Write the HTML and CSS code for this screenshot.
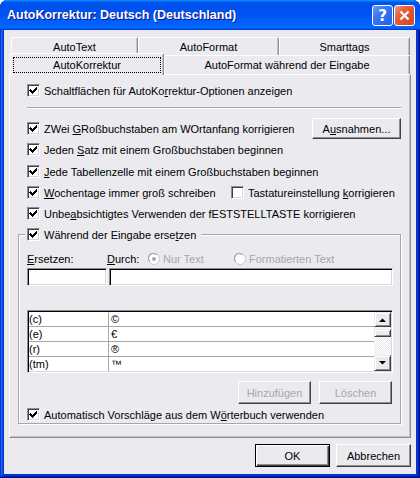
FILE: index.html
```html
<!DOCTYPE html>
<html lang="de">

<head>
  <meta charset="UTF-8">
  <title>AutoKorrektur: Deutsch (Deutschland)</title>
  <link rel="stylesheet" href="styles.css">
</head>

<body>
  <div class="window">
    <div class="titlebar">
      <span class="title">AutoKorrektur: Deutsch (Deutschland)</span>
      <div class="title-buttons">
        <span class="tbtn help">?</span>
        <span class="tbtn close">
          <svg width="11" height="11" viewBox="0 0 11 11"><path d="M1.5 1.5l8 8M9.5 1.5l-8 8" stroke="#fff" stroke-width="2.2"/></svg>
        </span>
      </div>
    </div>

    <div class="client">
      <div class="tab-row back">
        <div class="tab t-autotext">AutoText</div>
        <div class="tab t-autoformat">AutoFormat</div>
        <div class="tab t-smarttags">Smarttags</div>
      </div>
      <div class="tab-row front">
        <div class="tab active"><span class="focus">AutoKorrektur</span></div>
        <div class="tab t-eingabe">AutoFormat während der Eingabe</div>
      </div>

      <div class="panel">
        <div class="row">
          <span class="cb"><svg viewBox="2 2 9 9"><path d="M3 5h1v1h1v1h1v-1h1v-1h1v-1h1v-1h1v3h-1v1h-1v1h-1v1h-1v1h-1v-1h-1v-1h-1v-1h-1z"/></svg></span>
          <span class="lbl">Schaltflächen für AutoKo<u>r</u>rektur-Optionen anzeigen</span>
        </div>

        <div class="sep"></div>

        <div class="row row-btn">
          <span class="cb"><svg viewBox="2 2 9 9"><path d="M3 5h1v1h1v1h1v-1h1v-1h1v-1h1v-1h1v3h-1v1h-1v1h-1v1h-1v1h-1v-1h-1v-1h-1v-1h-1z"/></svg></span>
          <span class="lbl">ZWei <u>G</u>Roßbuchstaben am WOrtanfang korrigieren</span>
          <button class="btn btn-ausnahmen">A<u>u</u>snahmen...</button>
        </div>

        <div class="row r3">
          <span class="cb"><svg viewBox="2 2 9 9"><path d="M3 5h1v1h1v1h1v-1h1v-1h1v-1h1v-1h1v3h-1v1h-1v1h-1v1h-1v1h-1v-1h-1v-1h-1v-1h-1z"/></svg></span>
          <span class="lbl">Jeden <u>S</u>atz mit einem Großbuchstaben beginnen</span>
        </div>

        <div class="row r4">
          <span class="cb"><svg viewBox="2 2 9 9"><path d="M3 5h1v1h1v1h1v-1h1v-1h1v-1h1v-1h1v3h-1v1h-1v1h-1v1h-1v1h-1v-1h-1v-1h-1v-1h-1z"/></svg></span>
          <span class="lbl"><u>J</u>ede Tabellenzelle mit einem Großbuchstaben beginnen</span>
        </div>

        <div class="row r5">
          <div class="half">
            <span class="cb"><svg viewBox="2 2 9 9"><path d="M3 5h1v1h1v1h1v-1h1v-1h1v-1h1v-1h1v3h-1v1h-1v1h-1v1h-1v1h-1v-1h-1v-1h-1v-1h-1z"/></svg></span>
            <span class="lbl"><u>W</u>ochentage immer groß schreiben</span>
          </div>
          <span class="cb"></span>
          <span class="lbl">Tastatureinstellung <u>k</u>orrigieren</span>
        </div>

        <div class="row r6">
          <span class="cb"><svg viewBox="2 2 9 9"><path d="M3 5h1v1h1v1h1v-1h1v-1h1v-1h1v-1h1v3h-1v1h-1v1h-1v1h-1v1h-1v-1h-1v-1h-1v-1h-1z"/></svg></span>
          <span class="lbl">Unbe<u>a</u>bsichtigtes Verwenden der fESTSTELLTASTE korrigieren</span>
        </div>

        <div class="group">
          <div class="legend">
            <span class="cb"><svg viewBox="2 2 9 9"><path d="M3 5h1v1h1v1h1v-1h1v-1h1v-1h1v-1h1v3h-1v1h-1v1h-1v1h-1v1h-1v-1h-1v-1h-1v-1h-1z"/></svg></span>
            <span class="lbl">Während der Eingabe erse<u>t</u>zen</span>
          </div>

          <div class="labels">
            <span class="l-ersetzen"><u>E</u>rsetzen:</span>
            <span class="l-durch"><u>D</u>urch:</span>
            <span class="radio r-nur">
              <svg width="12" height="12" viewBox="0 0 12 12">
                <circle cx="6" cy="6" r="5.5" fill="#fff" stroke="#c9c8cc"/>
                <path d="M1.8 8.5A4.6 4.6 0 0 1 8.5 1.8" fill="none" stroke="#a8a7ab" stroke-width="1.2"/>
                <circle cx="6" cy="6" r="2" fill="#a8a7ab"/>
              </svg>
              <span class="dis">Nur Text</span>
            </span>
            <span class="radio">
              <svg width="12" height="12" viewBox="0 0 12 12">
                <circle cx="6" cy="6" r="5.5" fill="#fff" stroke="#c9c8cc"/>
                <path d="M1.8 8.5A4.6 4.6 0 0 1 8.5 1.8" fill="none" stroke="#a8a7ab" stroke-width="1.2"/>
              </svg>
              <span class="dis">Formatierten Text</span>
            </span>
          </div>

          <div class="inputs">
            <span class="field f-ersetzen"></span>
            <span class="field f-durch"></span>
          </div>

          <div class="list">
            <div class="list-body">
              <div class="lrow"><span class="c1">(c)</span><span class="c2">©</span></div>
              <div class="lrow"><span class="c1">(e)</span><span class="c2">€</span></div>
              <div class="lrow"><span class="c1">(r)</span><span class="c2">®</span></div>
              <div class="lrow"><span class="c1">(tm)</span><span class="c2">™</span></div>
            </div>
            <div class="scrollbar">
              <span class="sb-btn sb-up"><svg width="7" height="4" viewBox="0 0 7 4"><path d="M0 4h7L3.5 0.5z"/></svg></span>
              <span class="sb-track t1"></span>
              <span class="sb-thumb"></span>
              <span class="sb-track t2"></span>
              <span class="sb-btn sb-down"><svg width="7" height="4" viewBox="0 0 7 4"><path d="M0 0h7L3.5 3.5z"/></svg></span>
            </div>
          </div>

          <div class="list-buttons">
            <button class="btn btn-small" disabled>Hinzufügen</button>
            <button class="btn btn-small" disabled>Löschen</button>
          </div>

          <div class="row r-last">
            <span class="cb"><svg viewBox="2 2 9 9"><path d="M3 5h1v1h1v1h1v-1h1v-1h1v-1h1v-1h1v3h-1v1h-1v1h-1v1h-1v1h-1v-1h-1v-1h-1v-1h-1z"/></svg></span>
            <span class="lbl">Automatisch Vorschläge aus dem W<u>ö</u>rterbuch verwenden</span>
          </div>
        </div>
      </div>

      <div class="dialog-buttons">
        <button class="btn btn-default">OK</button>
        <button class="btn">Abbrechen</button>
      </div>
    </div>
  </div>
</body>

</html>
```

FILE: styles.css
```css
body {
  margin: 0;
  background: #fff;
  font-family: "Liberation Sans", Arial, sans-serif;
  font-size: 11px;
  color: #000;
}

u {
  text-decoration-thickness: 1px;
  text-underline-offset: 1px;
}

.window {
  width: 420px;
  height: 478px;
  box-sizing: border-box;
  display: flex;
  flex-direction: column;
  padding: 0 4px 4px;
  border-radius: 8px 8px 0 0;
  background: #0831d9;
  box-shadow: inset -1px -1px #00138c, inset 1px 1px #0831d9, inset -2px -2px #001ea0,
    inset 2px 2px #166aee, inset -3px -3px #003bda, inset 3px 3px #0855dd;
}

/* title bar */
.titlebar {
  height: 30px;
  flex: none;
  margin: 0 -4px;
  padding: 0 5px 0 7px;
  display: flex;
  align-items: center;
  border-radius: 7px 7px 0 0;
  background: linear-gradient(180deg, #0997ff, #0053ee 8%, #0050ee 40%, #06f 88%, #06f 93%, #005bff 95%, #003dd7 96%, #003dd7);
}

.title {
  flex: 1;
  color: #fff;
  font-weight: bold;
  font-size: 12.5px;
  text-shadow: 1px 1px #0f1089;
}

.title-buttons {
  display: flex;
  gap: 1px;
  margin-top: 1px;
}

.tbtn {
  width: 21px;
  height: 21px;
  box-sizing: border-box;
  border: 1px solid #fff;
  border-radius: 3px;
  display: flex;
  align-items: center;
  justify-content: center;
}

.help {
  background: linear-gradient(135deg, #6a9ef8 0%, #3a78f0 35%, #2460e4 100%);
  color: #fff;
  font-family: "DejaVu Sans", sans-serif;
  font-weight: bold;
  font-size: 15px;
}

.close {
  background: linear-gradient(135deg, #f29a7c 0%, #e5603a 35%, #d24420 100%);
}

/* client area */
.client {
  flex: 1;
  background: #ebeaee;
  padding: 7px 5px 0;
}

.tab-row {
  display: flex;
}

.tab-row.back {
  height: 18px;
  margin-left: 2px;
}

.tab-row.front {
  height: 19px;
  margin-left: 1px;
  align-items: flex-start;
}

.tab {
  height: 100%;
  box-sizing: border-box;
  border: 1px solid;
  border-bottom: none;
  border-color: #fff #8f8e93 transparent #fff;
  border-radius: 2px 2px 0 0;
  box-shadow: inset -1px 0 #c4c3c8;
  display: flex;
  align-items: center;
  justify-content: center;
  background: #ebeaee;
}

.t-autotext { width: 127px; }
.t-autoformat { width: 141px; }
.t-smarttags { width: 131px; }
.t-eingabe { width: 246px; }

.tab.active {
  position: relative;
  z-index: 1;
  width: 154px;
  height: 22px;
  margin-top: -2px;
  padding: 3px 2px 0;
  align-items: flex-start;
}

.focus {
  flex: 1;
  height: 16px;
  box-sizing: border-box;
  border: 1px dotted #000;
  display: flex;
  align-items: center;
  justify-content: center;
}

.panel {
  height: 364px;
  box-sizing: border-box;
  border: 1px solid;
  border-color: #fff #8f8e93 #8f8e93 #fff;
  box-shadow: inset -1px -1px #c4c3c8;
  padding: 9px 9px 0 8px;
}

.row {
  display: flex;
  align-items: center;
  height: 13px;
  padding-left: 9px;
}

.cb {
  width: 13px;
  height: 13px;
  flex: none;
  box-sizing: border-box;
  border: 1px solid;
  border-color: #8f8e93 #fff #fff #8f8e93;
  box-shadow: inset 1px 1px #404040, inset -1px -1px #d8d7db;
  background: #fff;
  padding: 1px;
}

.cb svg {
  display: block;
  width: 9px;
  height: 9px;
  shape-rendering: crispEdges;
}

.lbl {
  margin-left: 4px;
  white-space: nowrap;
}

.sep {
  margin: 10px 0 0 9px;
  height: 0;
  border-top: 1px solid #a7a6aa;
  border-bottom: 1px solid #fff;
}

.row-btn {
  height: 21px;
  margin-top: 9px;
}

.r3 { margin-top: 4px; }
.r4 { margin-top: 9px; }
.r5 { margin-top: 8px; }
.r6 { margin-top: 8px; }

.half {
  width: 204px;
  display: flex;
  align-items: center;
}

/* buttons */
.btn {
  font: inherit;
  color: #000;
  height: 23px;
  padding: 0;
  box-sizing: border-box;
  background: #ebeaee;
  border: 1px solid;
  border-color: #fff #404040 #404040 #fff;
  box-shadow: inset -1px -1px #8f8e93;
}

.btn:disabled {
  color: #a8a7ab;
}

.btn-ausnahmen {
  width: 89px;
  height: 21px;
  margin-left: auto;
}

.btn-default {
  border: 1px solid #000;
  box-shadow: inset 1px 1px #fff, inset -1px -1px #404040, inset -2px -2px #8f8e93;
}

/* group box */
.group {
  margin-top: 14px;
  border: 1px solid #a7a6aa;
  box-shadow: inset 1px 1px #fff, 1px 1px #fff;
  padding: 0 7px 2px 8px;
  display: flex;
  flex-direction: column;
}

.legend {
  align-self: flex-start;
  display: flex;
  align-items: center;
  height: 13px;
  margin: -7px 0 0 -2px;
  padding: 0 5px 0 2px;
  background: #ebeaee;
}

.labels {
  display: flex;
  align-items: center;
  height: 13px;
  margin-top: 11px;
  white-space: nowrap;
}

.l-ersetzen { width: 80px; }
.l-durch { width: 41px; }

.radio {
  display: flex;
  align-items: center;
  gap: 3px;
}

.radio svg { display: block; }

.r-nur { width: 86px; }

.dis { color: #a8a7ab; }

.inputs {
  display: flex;
  gap: 2px;
  margin-top: 3px;
}

.field {
  height: 18px;
  box-sizing: border-box;
  background: #fff;
  border: 1px solid;
  border-color: #8f8e93 #fff #fff #8f8e93;
  box-shadow: inset 1px 1px #000, inset -1px -1px #d8d7db;
}

.f-ersetzen { width: 80px; }
.f-durch { width: 284px; }

/* list */
.list {
  margin-top: 24px;
  height: 63px;
  box-sizing: border-box;
  display: flex;
  background: #fff;
  border: 1px solid;
  border-color: #8f8e93 #fff #fff #8f8e93;
  box-shadow: inset 1px 1px #000, inset -1px -1px #d8d7db;
  padding: 1px;
}

.list-body {
  flex: 1;
}

.lrow {
  display: flex;
  height: 14px;
  border-bottom: 1px solid #a7a6aa;
  line-height: 14px;
}

.lrow:last-child {
  border-bottom: none;
}

.c1 {
  width: 79px;
  border-right: 1px solid #a7a6aa;
}

.c2 {
  padding-left: 2px;
}

.scrollbar {
  width: 17px;
  display: flex;
  flex-direction: column;
}

.sb-btn,
.sb-thumb {
  box-sizing: border-box;
  background: #ebeaee;
  border: 1px solid;
  border-color: #ebeaee #404040 #404040 #ebeaee;
  box-shadow: inset 1px 1px #fff, inset -1px -1px #8f8e93;
  display: flex;
  align-items: center;
  justify-content: center;
}

.sb-up { height: 15px; }
.sb-down { height: 16px; }
.sb-thumb { height: 8px; }

.sb-btn svg { display: block; }

.sb-track {
  background: repeating-conic-gradient(#fff 0 25%, #ebeaee 0 50%) 0 0 / 2px 2px;
}

.t1 { height: 2px; }
.t2 { height: 18px; }

.list-buttons {
  display: flex;
  justify-content: flex-end;
  gap: 8px;
  margin: 8px 1px 0 0;
}

.btn-small {
  width: 73px;
}

.r-last {
  margin-top: 4px;
  padding-left: 0;
}

.dialog-buttons {
  display: flex;
  justify-content: flex-end;
  gap: 6px;
  margin-top: 6px;
}

.dialog-buttons .btn {
  width: 75px;
}
```
